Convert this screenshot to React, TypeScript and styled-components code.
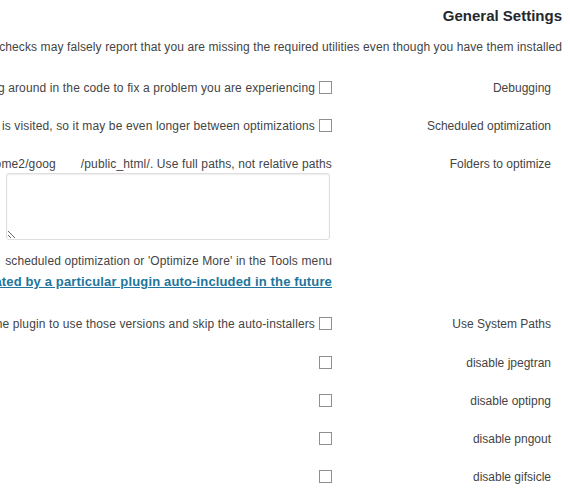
import React from 'react';
import styled, { createGlobalStyle } from 'styled-components';

const GlobalStyle = createGlobalStyle`
  html, body {
    margin: 0;
    padding: 0;
    background: #fff;
    overflow: hidden;
    direction: rtl;
  }
  body {
    font-family: "Liberation Sans", Arial, sans-serif;
    font-size: 12px;
    color: #444;
  }
`;

type Option = {
  label: string;
  text?: string;
};

const checkRows: Option[] = [
  {
    label: 'Debugging',
    text: 'Use this to provide information for support purposes, or if you feel comfortable digging around in the code to fix a problem you are experiencing',
  },
  {
    label: 'Scheduled optimization',
    text: 'Relies on WordPress cron, which only runs when your site is visited, so it may be even longer between optimizations',
  },
];

const toolRows: Option[] = [
  { label: 'disable jpegtran' },
  { label: 'disable optipng' },
  { label: 'disable pngout' },
  { label: 'disable gifsicle' },
];

export default function App() {
  return (
    <Page>
      <GlobalStyle />
      <Heading>General Settings</Heading>
      <Intro>
        <Ltr>
          If you are on shared hosting with exec() disabled, the utility checks may falsely report that you are missing the required utilities even though you have them installed
        </Ltr>
      </Intro>

      <Form>
        {checkRows.map((row) => (
          <Row key={row.label}>
            <Label>{row.label}</Label>
            <Field>
              <Check type="checkbox" />
              <Ltr>{row.text}</Ltr>
            </Field>
          </Row>
        ))}

        <Row tall>
          <Label>Folders to optimize</Label>
          <Field>
            <Line>
              <Ltr>
                One path per line, must be within /home2/goog
                <Redacted />
                /public_html/. Use full paths, not relative paths
              </Ltr>
            </Line>
            <Paths />
            <Line>
              <Ltr>
                Provide paths containing images to be optimized using&nbsp; scheduled optimization or 'Optimize More' in the Tools menu
              </Ltr>
            </Line>
            <LinkLine>
              <Ltr>
                <SupportLink href="#">
                  Please submit a support request in the forums to have folders created by a particular plugin auto-included in the future
                </SupportLink>
              </Ltr>
            </LinkLine>
          </Field>
        </Row>

        <Row loose>
          <Label>Use System Paths</Label>
          <Field>
            <Check type="checkbox" />
            <Ltr>
              If you have already installed the utilities in a system location, such as /usr/local/bin or /usr/bin, use this to force the plugin to use those versions and skip the auto-installers
            </Ltr>
          </Field>
        </Row>

        {toolRows.map((row) => (
          <Row key={row.label} short>
            <Label>{row.label}</Label>
            <Field>
              <Check type="checkbox" />
            </Field>
          </Row>
        ))}
      </Form>
    </Page>
  );
}

const Page = styled.div`
  padding: 6px 8px 0 0;
`;

const Heading = styled.h2`
  margin: 0;
  font-size: 15px;
  line-height: 20px;
  font-weight: bold;
  color: #23282d;
`;

const Intro = styled.p`
  margin: 12px 0 13px;
  line-height: 18px;
  white-space: nowrap;
  letter-spacing: 0.1px;
`;

const Ltr = styled.span`
  direction: ltr;
  unicode-bidi: isolate;
`;

const Form = styled.div`
  margin-right: 11px;
  display: flex;
  flex-direction: column;
`;

const Row = styled.div<{ tall?: boolean; short?: boolean; loose?: boolean }>`
  display: flex;
  align-items: flex-start;
  height: ${({ short }) => (short ? '38px' : 'auto')};
  box-sizing: border-box;
  padding: ${({ tall, loose }) => (tall ? '10px 0 14px' : loose ? '10px 0 11px' : '10px 0')};
  line-height: 18px;
`;

const Label = styled.div`
  flex: 0 0 219px;
  text-align: right;
  color: #444;
`;

const Field = styled.div`
  flex: 1;
  white-space: nowrap;
  letter-spacing: 0.13px;
`;

const Check = styled.input`
  appearance: none;
  width: 13px;
  height: 13px;
  margin: 0 0 0 4px;
  border: 1px solid #8c8f94;
  border-radius: 0;
  background: #fff;
  vertical-align: -2px;
  box-sizing: border-box;
`;

const Line = styled.div`
  line-height: 18px;
`;

const Redacted = styled.span`
  display: inline-block;
  width: 25px;
`;

const Paths = styled.textarea`
  display: block;
  width: 324px;
  height: 67px;
  margin: 0 2px 12px 0;
  padding: 2px 6px;
  box-sizing: border-box;
  border: 1px solid #ddd;
  border-radius: 3px;
  box-shadow: inset 0 1px 2px rgba(0, 0, 0, 0.07);
  background: #fff;
  font-family: inherit;
  font-size: 12px;
`;

const LinkLine = styled.div`
  margin-top: 3px;
  line-height: 18px;
  font-weight: bold;
  font-size: 13px;
  letter-spacing: 0.15px;
`;

const SupportLink = styled.a`
  color: #21759b;
  text-decoration: underline;
`;
